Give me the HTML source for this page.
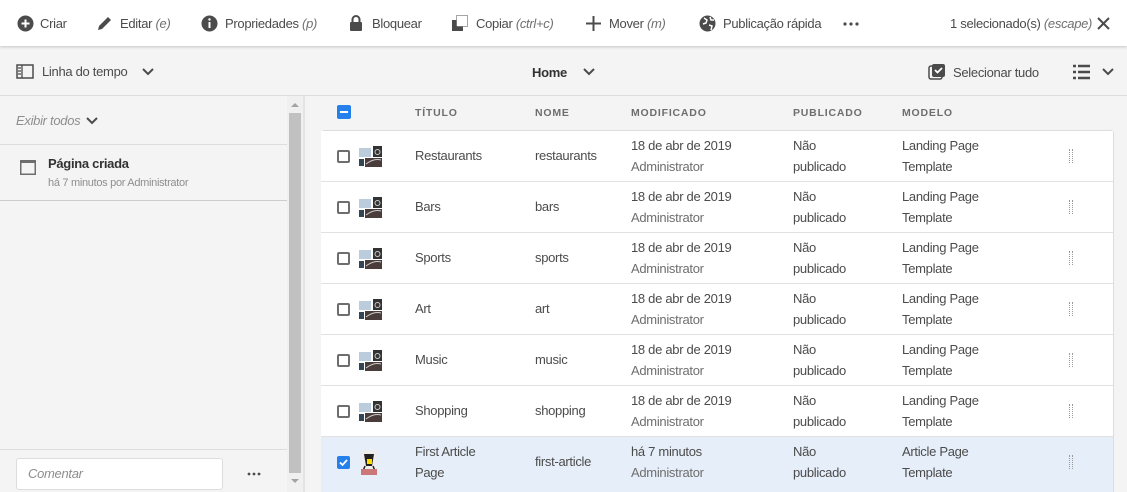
<!DOCTYPE html>
<html><head><meta charset="utf-8"><style>
*{margin:0;padding:0;box-sizing:border-box}
body{width:1127px;height:492px;overflow:hidden;background:#f4f4f4;font-family:"Liberation Sans",sans-serif;font-size:13px;color:#4b4b4b;position:relative;letter-spacing:-0.3px}
.a{position:absolute;white-space:nowrap}
.top{position:absolute;left:0;top:0;width:1127px;height:46px;background:#fff;box-shadow:0 1px 3px rgba(0,0,0,.2);z-index:2}
.i{font-style:italic;color:#707070}
.hd{position:absolute;font-size:10.5px;font-weight:bold;color:#6e6e6e;letter-spacing:0.8px;top:107px}
.row{position:absolute;left:321px;width:792px;height:51px;background:#fff;border-bottom:1px solid #e1e1e1}
.row .a{font-size:13px}
.cb{position:absolute;left:16px;top:19px;width:13px;height:13px;border:2px solid #6e6e6e;border-radius:2px;background:#fff}
.th{position:absolute;left:37px;top:15px;width:25px;height:21px}
.dots{position:absolute;left:748px;top:18px;width:4px;height:14px;border-left:1px dotted #999;border-right:1px dotted #999}
</style></head><body>
<div class="top">
 <svg class="a" style="left:17px;top:15px" width="17" height="17"><circle cx="8.5" cy="8.5" r="8" fill="#4b4b4b"/><path d="M8.5 4.5v8M4.5 8.5h8" stroke="#fff" stroke-width="2"/></svg>
 <span class="a" style="left:40px;top:16px">Criar</span>
 <svg class="a" style="left:96px;top:15px" width="18" height="17"><path d="M2 15l1-4 9-9 3 3-9 9z" fill="#4b4b4b"/></svg>
 <span class="a" style="left:120px;top:16px">Editar <span class="i">(e)</span></span>
 <svg class="a" style="left:201px;top:15px" width="17" height="17"><circle cx="8.5" cy="8.5" r="8" fill="#4b4b4b"/><rect x="7.5" y="7" width="2" height="6" fill="#fff"/><circle cx="8.5" cy="4.5" r="1.2" fill="#fff"/></svg>
 <span class="a" style="left:225px;top:16px">Propriedades <span class="i">(p)</span></span>
 <svg class="a" style="left:349px;top:14px" width="14" height="18"><path d="M3.5 8V5.5a3.5 3.5 0 017 0V8" stroke="#4b4b4b" stroke-width="2" fill="none"/><rect x="1" y="8" width="12" height="9" rx="1" fill="#4b4b4b"/></svg>
 <span class="a" style="left:372px;top:16px">Bloquear</span>
 <svg class="a" style="left:452px;top:15px" width="17" height="17"><rect x="0" y="5" width="11" height="11" fill="#4b4b4b"/><rect x="4.5" y="0.5" width="11" height="11" fill="#fff" stroke="#4b4b4b" stroke-dasharray="1 1"/></svg>
 <span class="a" style="left:476px;top:16px">Copiar <span class="i">(ctrl+c)</span></span>
 <svg class="a" style="left:585px;top:15px" width="17" height="17"><path d="M8.5 1v15M1 8.5h15" stroke="#4b4b4b" stroke-width="2"/></svg>
 <span class="a" style="left:609px;top:16px">Mover <span class="i">(m)</span></span>
 <svg class="a" style="left:699px;top:15px" width="17" height="17"><circle cx="8.5" cy="8.5" r="8" fill="#4b4b4b"/><path d="M5 3l3 2-1 3-3 1M10 10l3 1-1 4M11 2l1 3 3 0" stroke="#fff" stroke-width="1.5" fill="none"/></svg>
 <span class="a" style="left:723px;top:16px">Publicação rápida</span>
 <svg class="a" style="left:843px;top:22px" width="16" height="4"><circle cx="2" cy="2" r="1.6" fill="#4b4b4b"/><circle cx="8" cy="2" r="1.6" fill="#4b4b4b"/><circle cx="14" cy="2" r="1.6" fill="#4b4b4b"/></svg>
 <span class="a" style="left:950px;top:16px">1 selecionado(s) <span class="i">(escape)</span></span>
 <svg class="a" style="left:1097px;top:17px" width="13" height="13"><path d="M1 1l11 11M12 1L1 12" stroke="#4b4b4b" stroke-width="2"/></svg>
</div>
<svg class="a" style="left:16px;top:64px" width="18" height="15"><rect x="1" y="1" width="16" height="13" fill="none" stroke="#4b4b4b" stroke-width="1.5"/><path d="M6 1v13M2 4h3M2 7h3M2 10h3" stroke="#4b4b4b" stroke-width="1.3"/></svg>
<span class="a" style="left:42px;top:64px">Linha do tempo</span>
<svg class="a" style="left:142px;top:68px" width="12" height="8"><path d="M1 1l5 5 5-5" stroke="#4b4b4b" stroke-width="2" fill="none"/></svg>
<span class="a" style="left:532px;top:65px;font-weight:bold;color:#323232">Home</span>
<svg class="a" style="left:583px;top:68px" width="12" height="8"><path d="M1 1l5 5 5-5" stroke="#4b4b4b" stroke-width="2" fill="none"/></svg>
<svg class="a" style="left:928px;top:63px" width="18" height="18"><rect x="1" y="3" width="13" height="13" rx="2" fill="none" stroke="#4b4b4b" stroke-width="1.5"/><rect x="4" y="1" width="13" height="13" rx="2" fill="#4b4b4b"/><path d="M7 7l2.5 2.5L14 5" stroke="#fff" stroke-width="1.8" fill="none"/></svg>
<span class="a" style="left:953px;top:65px">Selecionar tudo</span>
<svg class="a" style="left:1073px;top:64px" width="17" height="16"><path d="M0 2h3M5 2h12M0 8h3M5 8h12M0 14h3M5 14h12" stroke="#4b4b4b" stroke-width="2.5"/></svg>
<svg class="a" style="left:1102px;top:68px" width="12" height="8"><path d="M1 1l5 5 5-5" stroke="#4b4b4b" stroke-width="2" fill="none"/></svg>
<div class="a" style="left:0;top:95px;width:1127px;height:1px;background:#ddd"></div>
<span class="a i" style="left:16px;top:113px;color:#8e8e8e">Exibir todos</span>
<svg class="a" style="left:86px;top:117px" width="12" height="8"><path d="M1 1l5 5 5-5" stroke="#4b4b4b" stroke-width="2" fill="none"/></svg>
<div class="a" style="left:0;top:144px;width:287px;height:1px;background:#ddd"></div>
<svg class="a" style="left:20px;top:160px" width="16" height="15"><rect x="0.75" y="0.75" width="14.5" height="13.5" fill="none" stroke="#6e6e6e" stroke-width="1.5"/><rect x="0" y="0" width="16" height="3" fill="#6e6e6e"/></svg>
<span class="a" style="left:48px;top:156px;font-weight:bold;color:#323232">Página criada</span>
<span class="a" style="left:48px;top:177px;font-size:11px;color:#8e8e8e">há 7 minutos por Administrator</span>
<div class="a" style="left:0;top:200px;width:287px;height:1px;background:#ccc"></div>
<div class="a" style="left:0;top:449px;width:287px;height:1px;background:#ddd"></div>
<div class="a" style="left:16px;top:458px;width:207px;height:32px;background:#fff;border:1px solid #ddd;border-radius:3px"></div>
<span class="a i" style="left:28px;top:466px;color:#8e8e8e">Comentar</span>
<svg class="a" style="left:247px;top:472px" width="14" height="4"><circle cx="2" cy="2" r="1.4" fill="#4b4b4b"/><circle cx="7" cy="2" r="1.4" fill="#4b4b4b"/><circle cx="12" cy="2" r="1.4" fill="#4b4b4b"/></svg>
<div class="a" style="left:287px;top:96px;width:16px;height:396px;background:#f0f0f0"></div>
<div class="a" style="left:289px;top:113px;width:12px;height:360px;background:#c1c1c1"></div>
<svg class="a" style="left:291px;top:102px" width="8" height="5"><path d="M0 5l4-4 4 4z" fill="#a3a3a3"/></svg>
<svg class="a" style="left:291px;top:479px" width="8" height="5"><path d="M0 0l4 4 4-4z" fill="#a3a3a3"/></svg>
<div class="a" style="left:303px;top:96px;width:2px;height:396px;background:#e4e4e4"></div>
<div class="a" style="left:337px;top:105px;width:14px;height:14px;background:#2680eb;border-radius:2px"><div style="position:absolute;left:3px;top:6px;width:8px;height:2px;background:#fff"></div></div>
<span class="hd" style="left:415px">TÍTULO</span>
<span class="hd" style="left:535px">NOME</span>
<span class="hd" style="left:631px">MODIFICADO</span>
<span class="hd" style="left:793px">PUBLICADO</span>
<span class="hd" style="left:902px">MODELO</span>
<div class="a" style="left:321px;top:130px;width:793px;height:362px;border:1px solid #ddd;border-radius:3px 3px 0 0"></div>
<div id="rows"></div>
<script>
const R=[["Restaurants","restaurants"],["Bars","bars"],["Sports","sports"],["Art","art"],["Music","music"],["Shopping","shopping"]];
let h="";
R.forEach((r,i)=>{const t=131+i*51;
h+=`<div class="row" style="top:${t}px"><div class="cb"></div>
<svg class="th" viewBox="0 0 25 21"><rect x="1" y="2" width="12" height="9" fill="#bcd"/><rect x="15" y="0" width="9" height="11" fill="#333"/><circle cx="19.5" cy="6" r="2.5" fill="none" stroke="#ccc"/><rect x="1" y="13" width="5" height="7" fill="#345"/><rect x="7" y="12" width="17" height="9" fill="#4a3c3a"/><path d="M8 18q8-6 15-4" stroke="#ccc" fill="none"/></svg>
<span class="a" style="left:94px;top:17px">${r[0]}</span><span class="a" style="left:214px;top:17px">${r[1]}</span>
<span class="a" style="left:310px;top:7px">18 de abr de 2019</span><span class="a" style="left:310px;top:28px;color:#6e6e6e">Administrator</span>
<span class="a" style="left:472px;top:7px">Não</span><span class="a" style="left:472px;top:28px">publicado</span>
<span class="a" style="left:581px;top:7px">Landing Page</span><span class="a" style="left:581px;top:28px">Template</span><div class="dots"></div></div>`;});
h+=`<div class="row" style="top:437px;background:#e6eef9;border-bottom:none;height:55px"><div class="cb" style="background:#2680eb;border-color:#2680eb"><svg style="position:absolute;left:0;top:0" width="9" height="9"><path d="M1 4.5l2.5 2.5L8 2" stroke="#fff" stroke-width="1.8" fill="none"/></svg></div>
<svg style="position:absolute;left:40px;top:13px" width="16" height="25" viewBox="0 0 16 25"><rect width="16" height="25" fill="#eee"/><path d="M3 4h10l-2 12H5z" fill="#222"/><rect x="6" y="9" width="5" height="5" fill="#fd0"/><path d="M4 16l-2 5M12 16l2 5" stroke="#222" stroke-width="1.5"/><rect x="0" y="19" width="16" height="6" fill="#c77"/></svg>
<span class="a" style="left:94px;top:7px">First Article</span><span class="a" style="left:94px;top:28px">Page</span><span class="a" style="left:214px;top:17px">first-article</span>
<span class="a" style="left:310px;top:7px">há 7 minutos</span><span class="a" style="left:310px;top:28px;color:#6e6e6e">Administrator</span>
<span class="a" style="left:472px;top:7px">Não</span><span class="a" style="left:472px;top:28px">publicado</span>
<span class="a" style="left:581px;top:7px">Article Page</span><span class="a" style="left:581px;top:28px">Template</span><div class="dots"></div></div>`;
document.getElementById("rows").innerHTML=h;
</script>
</body></html>
